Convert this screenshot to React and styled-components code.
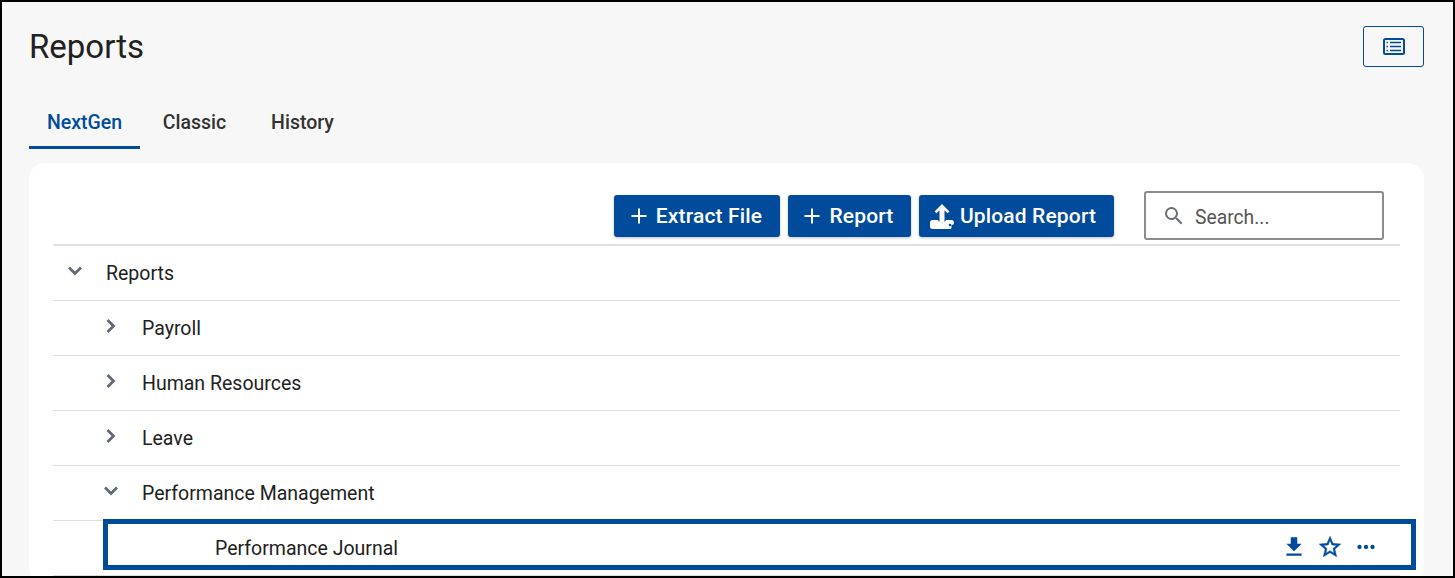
import styled, { createGlobalStyle } from 'styled-components';

const blue = '#004b9b';

const GlobalStyle = createGlobalStyle`
	html,
	body {
		margin: 0;
		padding: 0;
		background: #f7f7f7;
	}

	body {
		font-family: Roboto, 'Liberation Sans', sans-serif;
		color: #212121;
	}
`;

const Frame = styled.div`
	box-sizing: border-box;
	width: 1455px;
	height: 578px;
	padding: 0 29px 0 27px;
	border: 2px solid #000;
	background: #f7f7f7;
	overflow: hidden;
`;

const Header = styled.header`
	display: flex;
	justify-content: space-between;
	align-items: flex-start;
	height: 95px;
	padding-top: 23px;
	box-sizing: border-box;
`;

const Title = styled.h1`
	margin: 0;
	font-size: 33px;
	font-weight: 400;
	line-height: 44px;
	color: #212121;
`;

const ViewButton = styled.button`
	display: flex;
	align-items: center;
	justify-content: center;
	width: 61px;
	height: 41px;
	margin-top: 1px;
	padding: 0;
	border: 1px solid ${blue};
	border-radius: 3px;
	background: transparent;
	color: ${blue};
`;

const Tabs = styled.nav`
	display: flex;
	height: 52px;
`;

const Tab = styled.a`
	box-sizing: border-box;
	height: 52px;
	width: ${(props) => props.$width}px;
	padding-top: 14px;
	text-align: center;
	font-size: 19.5px;
	font-weight: 500;
	line-height: 24px;
	color: ${(props) => (props.$active ? blue : '#333')};
	border-bottom: 3px solid ${(props) => (props.$active ? blue : 'transparent')};
`;

const Card = styled.section`
	margin-top: 14px;
	padding: 28px 24px 0;
	height: 420px;
	box-sizing: border-box;
	background: #fff;
	border-radius: 16px;
`;

const Toolbar = styled.div`
	display: flex;
	align-items: flex-start;
	justify-content: flex-end;
	height: 53px;
	padding-right: 16px;
	border-bottom: 2px solid #e0e0e0;
`;

const ActionButton = styled.button`
	display: flex;
	align-items: center;
	justify-content: center;
	gap: ${(props) => props.$gap}px;
	box-sizing: border-box;
	width: ${(props) => props.$width}px;
	height: 42px;
	margin: 4px 8px 0 0;
	padding: 0 ${(props) => props.$padRight || 0}px 0 0;
	border: 0;
	border-radius: 3px;
	background: ${blue};
	color: #fff;
	font-family: inherit;
	font-size: 21px;
	font-weight: 500;
	letter-spacing: 0.15px;
	box-shadow: 0 1px 3px rgba(0, 0, 0, 0.25);
`;

const SearchBox = styled.label`
	display: flex;
	align-items: center;
	gap: 9px;
	box-sizing: border-box;
	width: 240px;
	height: 49px;
	margin-left: 22px;
	padding-left: 16px;
	border: 2px solid #8c8c8c;
	border-radius: 3px;
	color: #6b6f75;
`;

const SearchText = styled.span`
	padding-top: 3px;
	font-size: 19.3px;
	color: #555;
`;

const Row = styled.div`
	position: relative;
	display: flex;
	align-items: center;
	box-sizing: border-box;
	height: 55px;
	padding-left: ${(props) => props.$indent}px;
	border-bottom: 1px solid #dedede;
	font-size: 19.5px;
	color: #212121;
`;

const Chevron = styled.svg`
	flex: none;
	width: 24px;
	height: 24px;
	margin-top: -4px;
	margin-right: 19px;
	color: #616b76;
	transform: rotate(${(props) => (props.$open ? 90 : 0)}deg);
`;

const Highlight = styled.div`
	position: absolute;
	left: 50px;
	right: -16px;
	top: -2px;
	height: 51px;
	box-sizing: border-box;
	border: 5px solid ${blue};
`;

const RowActions = styled.div`
	position: absolute;
	right: 21px;
	top: 13px;
	display: flex;
	align-items: center;
	gap: 10px;
	color: ${blue};
`;

const ChevronIcon = ({ open }) => (
	<Chevron $open={open} viewBox="0 0 24 24" fill="none" stroke="currentColor" strokeWidth="2.8">
		<path d="M8.500 6l6 6-6 6" />
	</Chevron>
);

const PlusIcon = () => (
	<svg width="16" height="16" viewBox="0 0 16 16" fill="none" stroke="currentColor" strokeWidth="2">
		<path d="M8 0.5v15M0.5 8h15" />
	</svg>
);

const UploadIcon = () => (
	<svg width="24" height="25" viewBox="0 0 24 25" fill="currentColor">
		<path d="M12 0l7.500 7.500-2 1.800-3-3V18h-5V6.300l-3 3-2-1.800z" />
		<path d="M2.500 16H8c.5 3 7.500 3 8 0h5.500a2.500 2.500 0 0 1 0 5v2.500a1.500 1.500 0 0 1-1.500 1.500H2.500a2.500 2.500 0 0 1-2.500-2.500v-4A2.500 2.500 0 0 1 2.500 16z" />
		<circle cx="20" cy="21" r="1.300" fill="#004b9b" />
	</svg>
);

const ListIcon = () => (
	<svg width="22" height="17" viewBox="0 0 22 17" fill="none" stroke="currentColor">
		<rect x="1" y="1" width="20" height="15" rx="1.500" strokeWidth="2" />
		<path d="M7 4.500h11M7 8.500h11M7 12.500h11" strokeWidth="1.600" />
		<path d="M3.500 4.500h1.500M3.500 8.500h1.500M3.500 12.500h1.500" strokeWidth="1.600" />
	</svg>
);

const SearchIcon = () => (
	<svg width="24" height="24" viewBox="0 0 24 24" fill="currentColor">
		<path d="M15.500 14h-.79l-.28-.27A6.470 6.470 0 0 0 16 9.500 6.500 6.500 0 1 0 9.500 16c1.610 0 3.090-.59 4.230-1.570l.27.28v.79l5 4.990L20.490 19l-4.990-5zm-6 0C7.010 14 5 11.990 5 9.500S7.010 5 9.500 5 14 7.010 14 9.500 11.990 14 9.500 14z" />
	</svg>
);

const DownloadIcon = () => (
	<svg width="26" height="26" viewBox="0 0 24 24" fill="currentColor">
		<path d="M19 9h-4V3H9v6H5l7 7 7-7zM5 18v2h14v-2H5z" />
	</svg>
);

const StarIcon = () => (
	<svg width="26" height="26" viewBox="0 0 24 24" fill="currentColor" stroke="currentColor" strokeWidth="0.4">
		<path d="M22 9.240l-7.190-.62L12 2 9.190 8.630 2 9.240l5.460 4.730L5.820 21 12 17.270 18.180 21l-1.630-7.030L22 9.240zM12 15.400l-3.760 2.270 1-4.280-3.320-2.880 4.380-.38L12 6.100l1.710 4.040 4.380.38-3.320 2.880 1 4.280L12 15.400z" />
	</svg>
);

const MoreIcon = () => (
	<svg width="26" height="26" viewBox="0 0 24 24" fill="currentColor">
		<circle cx="6" cy="12" r="2" />
		<circle cx="12" cy="12" r="2" />
		<circle cx="18" cy="12" r="2" />
	</svg>
);

export default function App() {
	return (
		<Frame>
			<GlobalStyle />
			<Header>
				<Title>Reports</Title>
				<ViewButton aria-label="List view">
					<ListIcon />
				</ViewButton>
			</Header>
			<Tabs>
				<Tab $active $width={111}>NextGen</Tab>
				<Tab $width={109}>Classic</Tab>
				<Tab $width={107}>History</Tab>
			</Tabs>
			<Card>
				<Toolbar>
					<ActionButton $width={166} $gap={9} $padRight={1}>
						<PlusIcon />
						Extract File
					</ActionButton>
					<ActionButton $width={123} $gap={9} $padRight={1}>
						<PlusIcon />
						Report
					</ActionButton>
					<ActionButton $width={195} $gap={6} $padRight={7}>
						<UploadIcon />
						Upload Report
					</ActionButton>
					<SearchBox>
						<SearchIcon />
						<SearchText>Search...</SearchText>
					</SearchBox>
				</Toolbar>
				<Row $indent={10}>
					<ChevronIcon open />
					Reports
				</Row>
				<Row $indent={46}>
					<ChevronIcon />
					Payroll
				</Row>
				<Row $indent={46}>
					<ChevronIcon />
					Human Resources
				</Row>
				<Row $indent={46}>
					<ChevronIcon />
					Leave
				</Row>
				<Row $indent={46}>
					<ChevronIcon open />
					Performance Management
				</Row>
				<Row $indent={162}>
					Performance Journal
					<Highlight />
					<RowActions>
						<DownloadIcon />
						<StarIcon />
						<MoreIcon />
					</RowActions>
				</Row>
			</Card>
		</Frame>
	);
}
